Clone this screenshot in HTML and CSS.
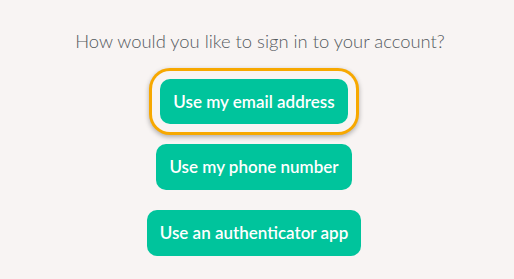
FILE: index.html
```html
<!DOCTYPE html>
<html>
<head>
  <link rel="stylesheet" href="styles.css">
</head>
<body>
  <div class="signin">
    <p class="prompt">How would you like to sign in to your account?</p>
    <div class="options">
      <button class="option focused">Use my email address</button>
      <button class="option">Use my phone number</button>
      <button class="option">Use an authenticator app</button>
    </div>
  </div>
</body>
</html>
```

FILE: styles.css
```css
body {
  margin: 0;
  padding: 0;
  background-color: #f8f4f3;
  font-family: 'Lato', 'Noto Sans', sans-serif;
}

.signin {
  display: flex;
  flex-direction: column;
  align-items: center;
  padding-top: 29px;
}

.prompt {
  margin: 0 0 0 6px;
  font-size: 18.4px;
  line-height: 24px;
  font-weight: 300;
  color: #555a5e;
}

.options {
  display: flex;
  flex-direction: column;
  align-items: center;
  gap: 20px;
  margin: 26px 6px 0 0;
}

.option {
  border: none;
  border-radius: 10px;
  background-color: #00c49c;
  color: #ffffff;
  font-family: inherit;
  font-size: 17px;
  font-weight: 600;
  line-height: 24px;
  height: 46px;
  padding: 0 13px;
  cursor: pointer;
}

.option.focused {
  height: 45px;
  box-shadow: 0 0 0 8px #f8f4f3,
              0 0 0 11px #f7a800,
              0 2px 5px 11px rgba(0, 0, 0, 0.3);
}
```
